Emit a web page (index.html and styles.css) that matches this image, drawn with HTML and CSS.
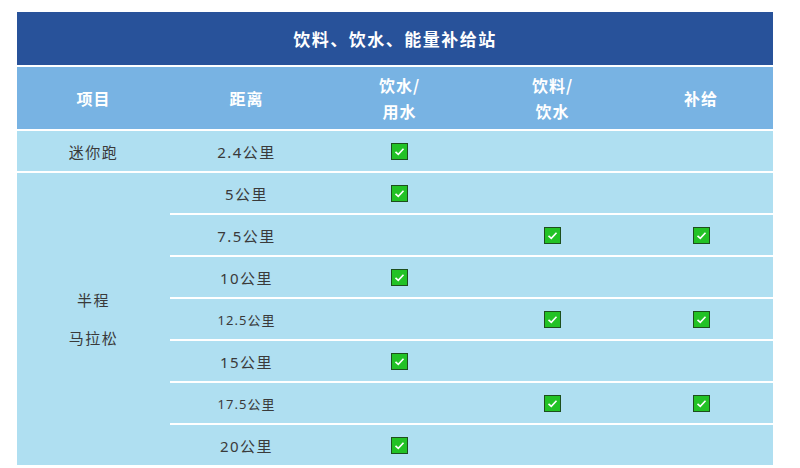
FILE: index.html
```html
<!DOCTYPE html>
<html lang="zh">
<head>
<meta charset="utf-8">
<link rel="stylesheet" href="styles.css">
</head>
<body>
<div class="page">
  <div class="grid">
    <div class="title">饮料、饮水、能量补给站</div>
    <div class="th">项目</div>
    <div class="th">距离</div>
    <div class="th">饮水/<br>用水</div>
    <div class="th">饮料/<br>饮水</div>
    <div class="th">补给</div>

    <div class="td">迷你跑</div>
    <div class="td">2.4公里</div>
    <div class="td"><svg class="ck" viewBox="0 0 17 17"><rect x="0.5" y="0.5" width="16" height="16" fill="#22c225" stroke="#1d4f1d"/><polyline points="4.5,8.8 7.3,11.4 12.5,5.8" fill="none" stroke="#fff" stroke-width="1.6"/></svg></div>
    <div class="td"></div>
    <div class="td"></div>

    <div class="td span">半程<br>马拉松</div>
    <div class="td">5公里</div>
    <div class="td"><svg class="ck" viewBox="0 0 17 17"><rect x="0.5" y="0.5" width="16" height="16" fill="#22c225" stroke="#1d4f1d"/><polyline points="4.5,8.8 7.3,11.4 12.5,5.8" fill="none" stroke="#fff" stroke-width="1.6"/></svg></div>
    <div class="td"></div>
    <div class="td"></div>

    <div class="td">7.5公里</div>
    <div class="td"></div>
    <div class="td"><svg class="ck" viewBox="0 0 17 17"><rect x="0.5" y="0.5" width="16" height="16" fill="#22c225" stroke="#1d4f1d"/><polyline points="4.5,8.8 7.3,11.4 12.5,5.8" fill="none" stroke="#fff" stroke-width="1.6"/></svg></div>
    <div class="td"><svg class="ck" viewBox="0 0 17 17"><rect x="0.5" y="0.5" width="16" height="16" fill="#22c225" stroke="#1d4f1d"/><polyline points="4.5,8.8 7.3,11.4 12.5,5.8" fill="none" stroke="#fff" stroke-width="1.6"/></svg></div>

    <div class="td">10公里</div>
    <div class="td"><svg class="ck" viewBox="0 0 17 17"><rect x="0.5" y="0.5" width="16" height="16" fill="#22c225" stroke="#1d4f1d"/><polyline points="4.5,8.8 7.3,11.4 12.5,5.8" fill="none" stroke="#fff" stroke-width="1.6"/></svg></div>
    <div class="td"></div>
    <div class="td"></div>

    <div class="td small">12.5公里</div>
    <div class="td"></div>
    <div class="td"><svg class="ck" viewBox="0 0 17 17"><rect x="0.5" y="0.5" width="16" height="16" fill="#22c225" stroke="#1d4f1d"/><polyline points="4.5,8.8 7.3,11.4 12.5,5.8" fill="none" stroke="#fff" stroke-width="1.6"/></svg></div>
    <div class="td"><svg class="ck" viewBox="0 0 17 17"><rect x="0.5" y="0.5" width="16" height="16" fill="#22c225" stroke="#1d4f1d"/><polyline points="4.5,8.8 7.3,11.4 12.5,5.8" fill="none" stroke="#fff" stroke-width="1.6"/></svg></div>

    <div class="td">15公里</div>
    <div class="td"><svg class="ck" viewBox="0 0 17 17"><rect x="0.5" y="0.5" width="16" height="16" fill="#22c225" stroke="#1d4f1d"/><polyline points="4.5,8.8 7.3,11.4 12.5,5.8" fill="none" stroke="#fff" stroke-width="1.6"/></svg></div>
    <div class="td"></div>
    <div class="td"></div>

    <div class="td small">17.5公里</div>
    <div class="td"></div>
    <div class="td"><svg class="ck" viewBox="0 0 17 17"><rect x="0.5" y="0.5" width="16" height="16" fill="#22c225" stroke="#1d4f1d"/><polyline points="4.5,8.8 7.3,11.4 12.5,5.8" fill="none" stroke="#fff" stroke-width="1.6"/></svg></div>
    <div class="td"><svg class="ck" viewBox="0 0 17 17"><rect x="0.5" y="0.5" width="16" height="16" fill="#22c225" stroke="#1d4f1d"/><polyline points="4.5,8.8 7.3,11.4 12.5,5.8" fill="none" stroke="#fff" stroke-width="1.6"/></svg></div>

    <div class="td">20公里</div>
    <div class="td"><svg class="ck" viewBox="0 0 17 17"><rect x="0.5" y="0.5" width="16" height="16" fill="#22c225" stroke="#1d4f1d"/><polyline points="4.5,8.8 7.3,11.4 12.5,5.8" fill="none" stroke="#fff" stroke-width="1.6"/></svg></div>
    <div class="td"></div>
    <div class="td"></div>
  </div>
</div>
</body>
</html>
```

FILE: styles.css
```css
* { box-sizing: border-box; }
html, body { margin: 0; padding: 0; background: #ffffff; }
body {
  font-family: "Noto Sans CJK SC", "Noto Sans", sans-serif;
}
.page {
  padding: 12px 0 0 17px;
}
.grid {
  width: 756px;
  display: grid;
  grid-template-columns: 153px 153px 153px 153px 1fr;
  grid-template-rows: 53px 64px repeat(8, 42px);
}
.title {
  grid-column: 1 / -1;
  background: #28529a;
  color: #ffffff;
  font-weight: bold;
  font-size: 17px;
  letter-spacing: 1.5px;
  display: flex;
  align-items: center;
  justify-content: center;
}
.th {
  border-top: 2px solid #ffffff;
  background: #78b3e3;
  color: #ffffff;
  font-weight: bold;
  font-size: 16px;
  letter-spacing: 1px;
  line-height: 26px;
  display: flex;
  align-items: center;
  justify-content: center;
  text-align: center;
}
.td {
  border-top: 2px solid #ffffff;
  background: #afdff1;
  color: #3a3a3a;
  font-family: "Noto Sans", "Noto Sans CJK SC", sans-serif;
  font-size: 15px;
  letter-spacing: 1.5px;
  display: flex;
  align-items: center;
  justify-content: center;
  text-align: center;
}
.td.small {
  font-size: 13px;
  letter-spacing: 1px;
}
.td.span {
  grid-row: span 7;
  line-height: 38px;
}
.ck {
  width: 17px;
  height: 17px;
  display: block;
}
```
